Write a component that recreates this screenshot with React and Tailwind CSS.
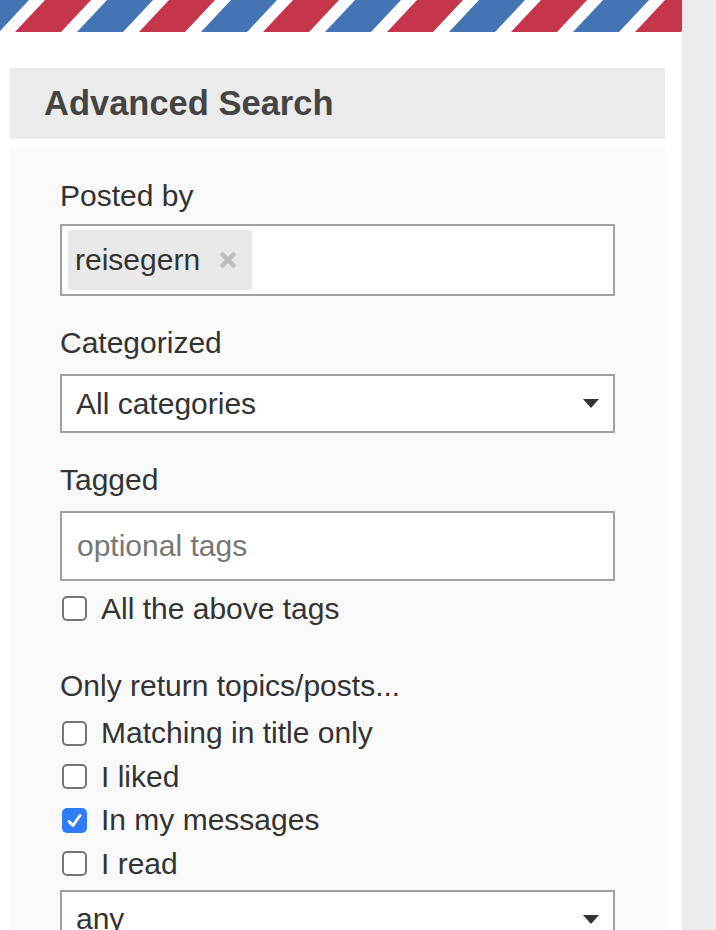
import React from "react";

const font = { fontFamily: '"Liberation Sans", Arial, sans-serif' };

const Stripes = () => {
  const bands = [];
  for (let k = -1; k < 7; k++) {
    const r = 15 + 124 * k;
    const b = r + 62;
    bands.push(
      <polygon key={"r" + k} points={`${r},32 ${r + 46},32 ${r + 76},0 ${r + 30},0`} fill="#c5354b" />
    );
    bands.push(
      <polygon key={"b" + k} points={`${b},32 ${b + 46},32 ${b + 76},0 ${b + 30},0`} fill="#4574b4" />
    );
  }
  return (
    <svg width="682" height="32" viewBox="0 0 682 32" className="block">
      <rect width="682" height="32" fill="#ffffff" />
      {bands}
    </svg>
  );
};

const Caret = () => (
  <svg width="16" height="9" viewBox="0 0 16 9">
    <polygon points="0,0 16,0 8,9" fill="#333333" />
  </svg>
);

const Checkbox = ({ checked }) =>
  checked ? (
    <span className="flex h-[25px] w-[25px] shrink-0 items-center justify-center rounded-[5px] bg-[#2f7cf6]">
      <svg width="17" height="17" viewBox="0 0 17 17">
        <path d="M3 9.5 L7 13.5 L14 3.5" fill="none" stroke="#ffffff" strokeWidth="3" strokeLinecap="round" strokeLinejoin="round" />
      </svg>
    </span>
  ) : (
    <span className="h-[25px] w-[25px] shrink-0 rounded-[5px] border-2 border-[#767676] bg-white" />
  );

const CheckRow = ({ label, checked }) => (
  <div className="flex h-[43.5px] items-center gap-[14px] pl-[2px]">
    <Checkbox checked={checked} />
    <span className="text-[30px] leading-[34px] text-[#333333]">{label}</span>
  </div>
);

const Label = ({ children, className }) => (
  <div className={"text-[30px] leading-[34px] text-[#333333] " + (className || "")}>{children}</div>
);

const Select = ({ value, className }) => (
  <div
    className={
      "flex h-[59px] items-center justify-between border-2 border-[#a0a0a0] bg-white pl-[14px] pr-[14px] " +
      (className || "")
    }
  >
    <span className="text-[30px] leading-[34px] text-[#333333]">{value}</span>
    <Caret />
  </div>
);

export default function App() {
  return (
    <div className="flex h-[930px] w-[716px] overflow-hidden bg-white" style={font}>
      <div className="w-[682px] shrink-0">
        <Stripes />
        <div className="pl-[10px] pr-[17px] pt-[36px]">
          <div className="flex h-[71px] items-center bg-[#ebebeb] pl-[34px]">
            <h2 className="text-[34.5px] font-bold leading-none text-[#444444]">Advanced Search</h2>
          </div>

          <div className="mt-[9px] h-[800px] bg-[#f9f9f9] px-[50px] pt-[31px]">
            <Label>Posted by</Label>
            <div className="mt-[11px] flex h-[72px] items-center border-2 border-[#a0a0a0] bg-white pl-[6px]">
              <div className="flex h-[60px] w-[184px] items-center bg-[#e9e9e9] pl-[7px]">
                <span className="text-[30px] leading-[34px] text-[#333333]">reisegern</span>
                <svg width="20" height="20" viewBox="0 0 20 20" className="ml-[18px]">
                  <path d="M3 3 L17 17 M17 3 L3 17" stroke="#bdbdbd" strokeWidth="4.5" />
                </svg>
              </div>
            </div>

            <Label className="mt-[30px]">Categorized</Label>
            <Select value="All categories" className="mt-[14px]" />

            <Label className="mt-[30px]">Tagged</Label>
            <div className="mt-[14px] flex h-[70px] items-center border-2 border-[#a0a0a0] bg-white pl-[15px]">
              <span className="text-[30px] leading-[34px] text-[#777777]">optional tags</span>
            </div>
            <div className="mt-[6px]">
              <CheckRow label="All the above tags" />
            </div>

            <Label className="mt-[38px]">Only return topics/posts...</Label>
            <div className="mt-[9px]">
              <CheckRow label="Matching in title only" />
              <CheckRow label="I liked" />
              <CheckRow label="In my messages" checked />
              <CheckRow label="I read" />
            </div>
            <Select value="any" className="mt-[4px]" />
          </div>
        </div>
      </div>
      <div className="flex-1 bg-[#ebebeb]" />
    </div>
  );
}
